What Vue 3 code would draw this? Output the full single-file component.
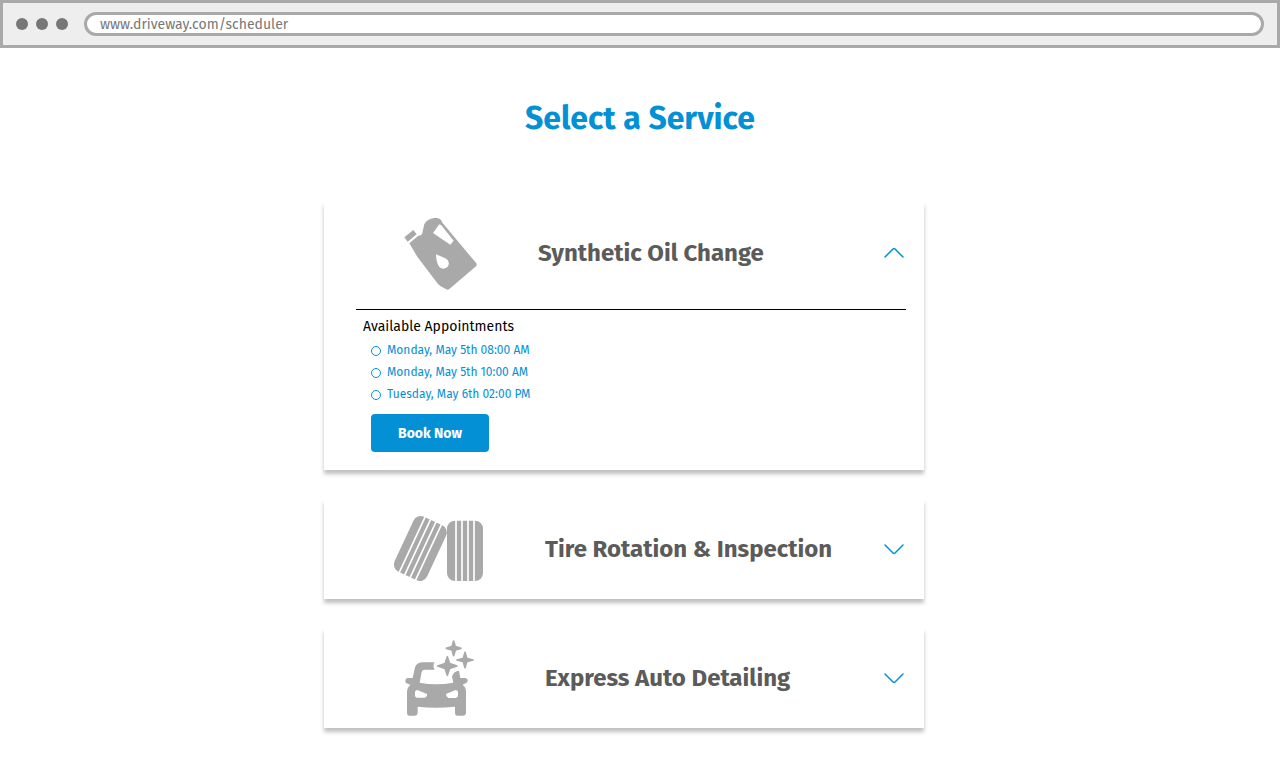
<script setup>
import { ref } from 'vue'

const address = ref('www.driveway.com/scheduler')
const selected = ref('')
const openId = ref('oil')
const services = [
  {
    id: 'oil',
    name: 'Synthetic Oil Change',
    slots: ['Monday, May 5th 08:00 AM', 'Monday, May 5th 10:00 AM', 'Tuesday, May 6th 02:00 PM'],
  },
  { id: 'tire', name: 'Tire Rotation & Inspection', slots: [] },
  { id: 'detail', name: 'Express Auto Detailing', slots: [] },
]
const toggle = (id) => {
  openId.value = openId.value === id ? '' : id
}
</script>

<template>
  <div class="page">
    <header class="browser">
      <span class="dot"></span>
      <span class="dot"></span>
      <span class="dot"></span>
      <input v-model="address" class="address" type="text" aria-label="Address" />
    </header>
    <main>
      <h1>Select a Service</h1>
      <div class="list">
        <section v-for="s in services" :key="s.id" class="card" :class="{ open: openId === s.id }">
          <button class="head" type="button" :aria-expanded="openId === s.id" @click="toggle(s.id)">
            <svg v-if="s.id === 'oil'" class="icon" viewBox="0 0 300 300" aria-hidden="true">
              <g transform="translate(6 -6)">
                <path class="ink" fill-rule="evenodd" d="M58 130L84 108L94 105L97 99L103 72Q112 55 137 53Q148 54 154 61L156 67L259 190Q262 195 258 199L178 267Q174 271 169 268L152 259L144 252L83 172ZM148 73L129 99L181 134L191 122L154 76ZM138 163C139 180 142 206 160 206C179 205 182 183 166 175Z" />
                <path class="ink" d="M43 112L70 90L80 103L53 125Z" />
              </g>
            </svg>
            <svg v-else-if="s.id === 'tire'" class="icon" viewBox="0 0 300 300" aria-hidden="true">
              <g transform="translate(-24 3)">
                <rect class="ink" x="201" y="62" width="108" height="181" rx="24" />
                <path class="groove" d="M228 60V246M246 60V246M264 60V246M282 60V246" />
                <g transform="translate(121 145.500) rotate(25)">
                  <rect class="ink" x="-54" y="-91" width="108" height="182" rx="24" />
                  <path class="groove" d="M-27 -93V93M-9 -93V93M9 -93V93M27 -93V93" />
                </g>
              </g>
            </svg>
            <svg v-else class="icon" viewBox="0 0 300 300" aria-hidden="true">
              <g transform="translate(6 6)">
                <path class="ink" fill-rule="evenodd" d="M100 97H134C129 103 129 111 134 119H104Q97 119 95 126L89 158Q138 168 190 158L186 140C190 128 198 123 207 123L211 144H226Q234 146 233 153Q231 160 222 162L218 164Q228 172 228 184V248Q227 257 219 257H203Q195 257 195 248V230Q138 236 83 230V248Q82 257 74 257H59Q51 257 51 248V184Q52 172 61 164L55 162Q46 160 46 153Q46 145 54 144H68L75 112Q80 97 100 97ZM82 180Q75 181 75 187V195Q75 203 82 203H104Q112 200 111 192ZM197 180L168 192Q167 200 175 204H197Q204 203 204 195V187Q204 181 197 180Z" />
                <path class="star" d="M172 80L179 101L201 108L179 115L172 136L165 115L143 108L165 101Z" />
                <path class="star" d="M191 33L196 50L213 55L196 60L191 77L186 60L169 55L186 50Z" />
                <path class="star" d="M225 67L230 85L249 90L230 95L225 113L220 95L201 90L220 85Z" />
              </g>
            </svg>
            <span class="name">{{ s.name }}</span>
            <svg class="chevron" viewBox="0 0 20 12" aria-hidden="true">
              <path d="M1 2L9 10Q10 11 11 10L19 2" />
            </svg>
          </button>
          <form v-if="openId === s.id && s.slots.length" class="details" @submit.prevent>
            <fieldset>
              <legend>Available Appointments</legend>
              <label v-for="slot in s.slots" :key="slot">
                <input v-model="selected" type="radio" name="slot" :value="slot" />
                <span>{{ slot }}</span>
              </label>
            </fieldset>
            <button class="book" type="submit">Book Now</button>
          </form>
        </section>
      </div>
    </main>
  </div>
</template>

<style>
body {
  background: #fff;
}
</style>

<style scoped>
.page,
.page button,
.page input {
  font-family: "Fira Sans", "Noto Sans", sans-serif;
}
.page * {
  box-sizing: border-box;
}
.browser {
  display: flex;
  align-items: center;
  gap: 8px;
  box-sizing: border-box;
  height: 48px;
  padding: 0 13px;
  border: 3px solid #a9a9a9;
  background: #eee;
}
.dot {
  width: 12px;
  height: 12px;
  border-radius: 50%;
  background: #777;
}
.address {
  flex: 1;
  min-width: 0;
  height: 24px;
  margin-left: 8px;
  padding: 0 13px;
  border: 3px solid #a9a9a9;
  border-radius: 12px;
  background: #fff;
  color: #777;
  font-size: 14px;
  line-height: 18px;
}
h1 {
  margin: 0;
  padding: 47px 0 61px;
  color: #0390d5;
  font-size: 32px;
  line-height: 46px;
  text-align: center;
}
.list {
  display: flex;
  flex-direction: column;
  align-items: center;
  gap: 29px;
  padding: 0 32px 24px 0;
}
.card {
  width: 100%;
  max-width: 600px;
  background: #fff;
  box-shadow: 0 4px 4px rgba(0, 0, 0, 0.25);
}
.head {
  display: grid;
  grid-template-columns: 157px 1fr 20px;
  align-items: center;
  width: 100%;
  height: 100px;
  padding: 0 20px 0 64px;
  border: 0;
  background: none;
  color: #5b5b5b;
  text-align: left;
  cursor: pointer;
}
.open .head {
  grid-template-columns: 150px 1fr 20px;
  grid-template-rows: 102px;
  height: 102px;
}
.icon {
  align-self: start;
  width: 100px;
  height: 100px;
}
.ink {
  fill: #a9a9a9;
}
.groove {
  fill: none;
  stroke: #fff;
  stroke-width: 5;
}
.star {
  fill: #a9a9a9;
  stroke: #a9a9a9;
  stroke-width: 5;
  stroke-linejoin: round;
}
.name {
  font-size: 24px;
  font-weight: 700;
  line-height: 32px;
  white-space: nowrap;
}
.chevron {
  width: 20px;
  height: 12px;
  fill: none;
  stroke: #0390d5;
  stroke-width: 1.500;
  stroke-linecap: round;
}
.open .chevron {
  transform: rotate(180deg);
}
.details {
  margin: 5px 18px 0 32px;
  padding: 5px 7px 18px;
  border-top: 1px solid #000;
}
fieldset {
  margin: 0;
  padding: 0;
  border: 0;
}
legend {
  padding: 0;
  margin-bottom: 1px;
  color: #000;
  font-size: 14px;
  line-height: 23px;
}
label {
  display: flex;
  align-items: center;
  gap: 6px;
  width: max-content;
  margin-left: 8px;
  color: #0390d5;
  font-size: 12px;
  line-height: 22px;
}
label input {
  appearance: none;
  width: 10px;
  height: 10px;
  margin: 2px 0 0;
  border: 1px solid #0390d5;
  border-radius: 50%;
}
label input:checked {
  background: #0390d5;
}
.book {
  display: block;
  width: 118px;
  height: 38px;
  margin: 9px 0 0 8px;
  padding: 0;
  border: 0;
  border-radius: 4px;
  background: #0390d5;
  color: #fff;
  font-size: 14px;
  font-weight: 700;
}
</style>
